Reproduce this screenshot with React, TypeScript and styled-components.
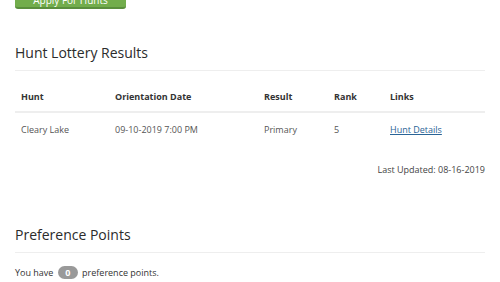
import * as React from "react";
import styled, { createGlobalStyle } from "styled-components";

const GlobalStyle = createGlobalStyle`
  html, body {
    margin: 0;
    padding: 0;
    background: #ffffff;
    overflow: hidden;
  }
  body {
    font-family: "Open Sans", "Noto Sans", sans-serif;
    color: #333333;
  }
`;

const Page = styled.div`
  padding: 0 15px;
  width: 470px;
`;

const ApplyButton = styled.button`
  display: block;
  margin-top: -17px;
  width: 111px;
  height: 26px;
  padding: 9px 0 0;
  border: none;
  border-bottom: 2px solid #5a8f3d;
  border-radius: 3px;
  background: #72ad4c;
  color: #ffffff;
  font-family: "Open Sans", sans-serif;
  font-size: 10px;
  line-height: 12px;
  vertical-align: top;
  box-sizing: border-box;
`;

const SectionHeading = styled.h3<{ $top: number }>`
  margin: 0;
  margin-top: ${(p) => p.$top}px;
  font-size: 14px;
  font-weight: 400;
  line-height: 20px;
  color: #2b2b2b;
  padding-top: 2px;
  padding-bottom: 7px;
  border-bottom: 1px solid #eeeeee;
`;

const Table = styled.table`
  width: 100%;
  table-layout: fixed;
  border-collapse: collapse;
  margin-top: 12px;
  font-size: 9px;
  line-height: 13px;
`;

const Th = styled.th<{ $w?: number }>`
  text-align: left;
  font-weight: 700;
  color: #333333;
  padding: 7px 6px 8px;
  border-bottom: 2px solid #eeeeee;
  width: ${(p) => (p.$w ? `${p.$w}px` : "auto")};
  box-sizing: border-box;
`;

const Td = styled.td`
  padding: 10px 6px 11px;
  color: #555555;
  white-space: nowrap;
`;

const DetailsLink = styled.a`
  color: #2a6496;
  text-decoration: underline;
`;

const Updated = styled.div`
  text-align: right;
  font-size: 9px;
  line-height: 13px;
  color: #444444;
  margin-top: 16px;
`;

const PointsText = styled.p`
  margin: 13px 0 0;
  font-size: 9px;
  line-height: 13px;
  color: #333333;
`;

const Badge = styled.span`
  display: inline-block;
  min-width: 8px;
  padding: 1px 6px;
  margin: 0 2px;
  border-radius: 7px;
  background: #999999;
  color: #ffffff;
  font-weight: 700;
  font-size: 9px;
  line-height: 11px;
  text-align: center;
`;

const results = [
  {
    hunt: "Cleary Lake",
    date: "09-10-2019 7:00 PM",
    result: "Primary",
    rank: 5,
  },
];

export default function App() {
  return (
    <>
      <GlobalStyle />
      <Page>
        <ApplyButton>Apply For Hunts</ApplyButton>

        <SectionHeading $top={32}>Hunt Lottery Results</SectionHeading>
        <Table>
          <thead>
            <tr>
              <Th $w={94}>Hunt</Th>
              <Th $w={149}>Orientation Date</Th>
              <Th $w={70}>Result</Th>
              <Th $w={56}>Rank</Th>
              <Th>Links</Th>
            </tr>
          </thead>
          <tbody>
            {results.map((r) => (
              <tr key={r.hunt}>
                <Td>{r.hunt}</Td>
                <Td>{r.date}</Td>
                <Td>{r.result}</Td>
                <Td>{r.rank}</Td>
                <Td>
                  <DetailsLink href="#">Hunt Details</DetailsLink>
                </Td>
              </tr>
            ))}
          </tbody>
        </Table>
        <Updated>Last Updated: 08-16-2019</Updated>

        <SectionHeading $top={47}>Preference Points</SectionHeading>
        <PointsText>
          You have <Badge>0</Badge> preference points.
        </PointsText>
      </Page>
    </>
  );
}
